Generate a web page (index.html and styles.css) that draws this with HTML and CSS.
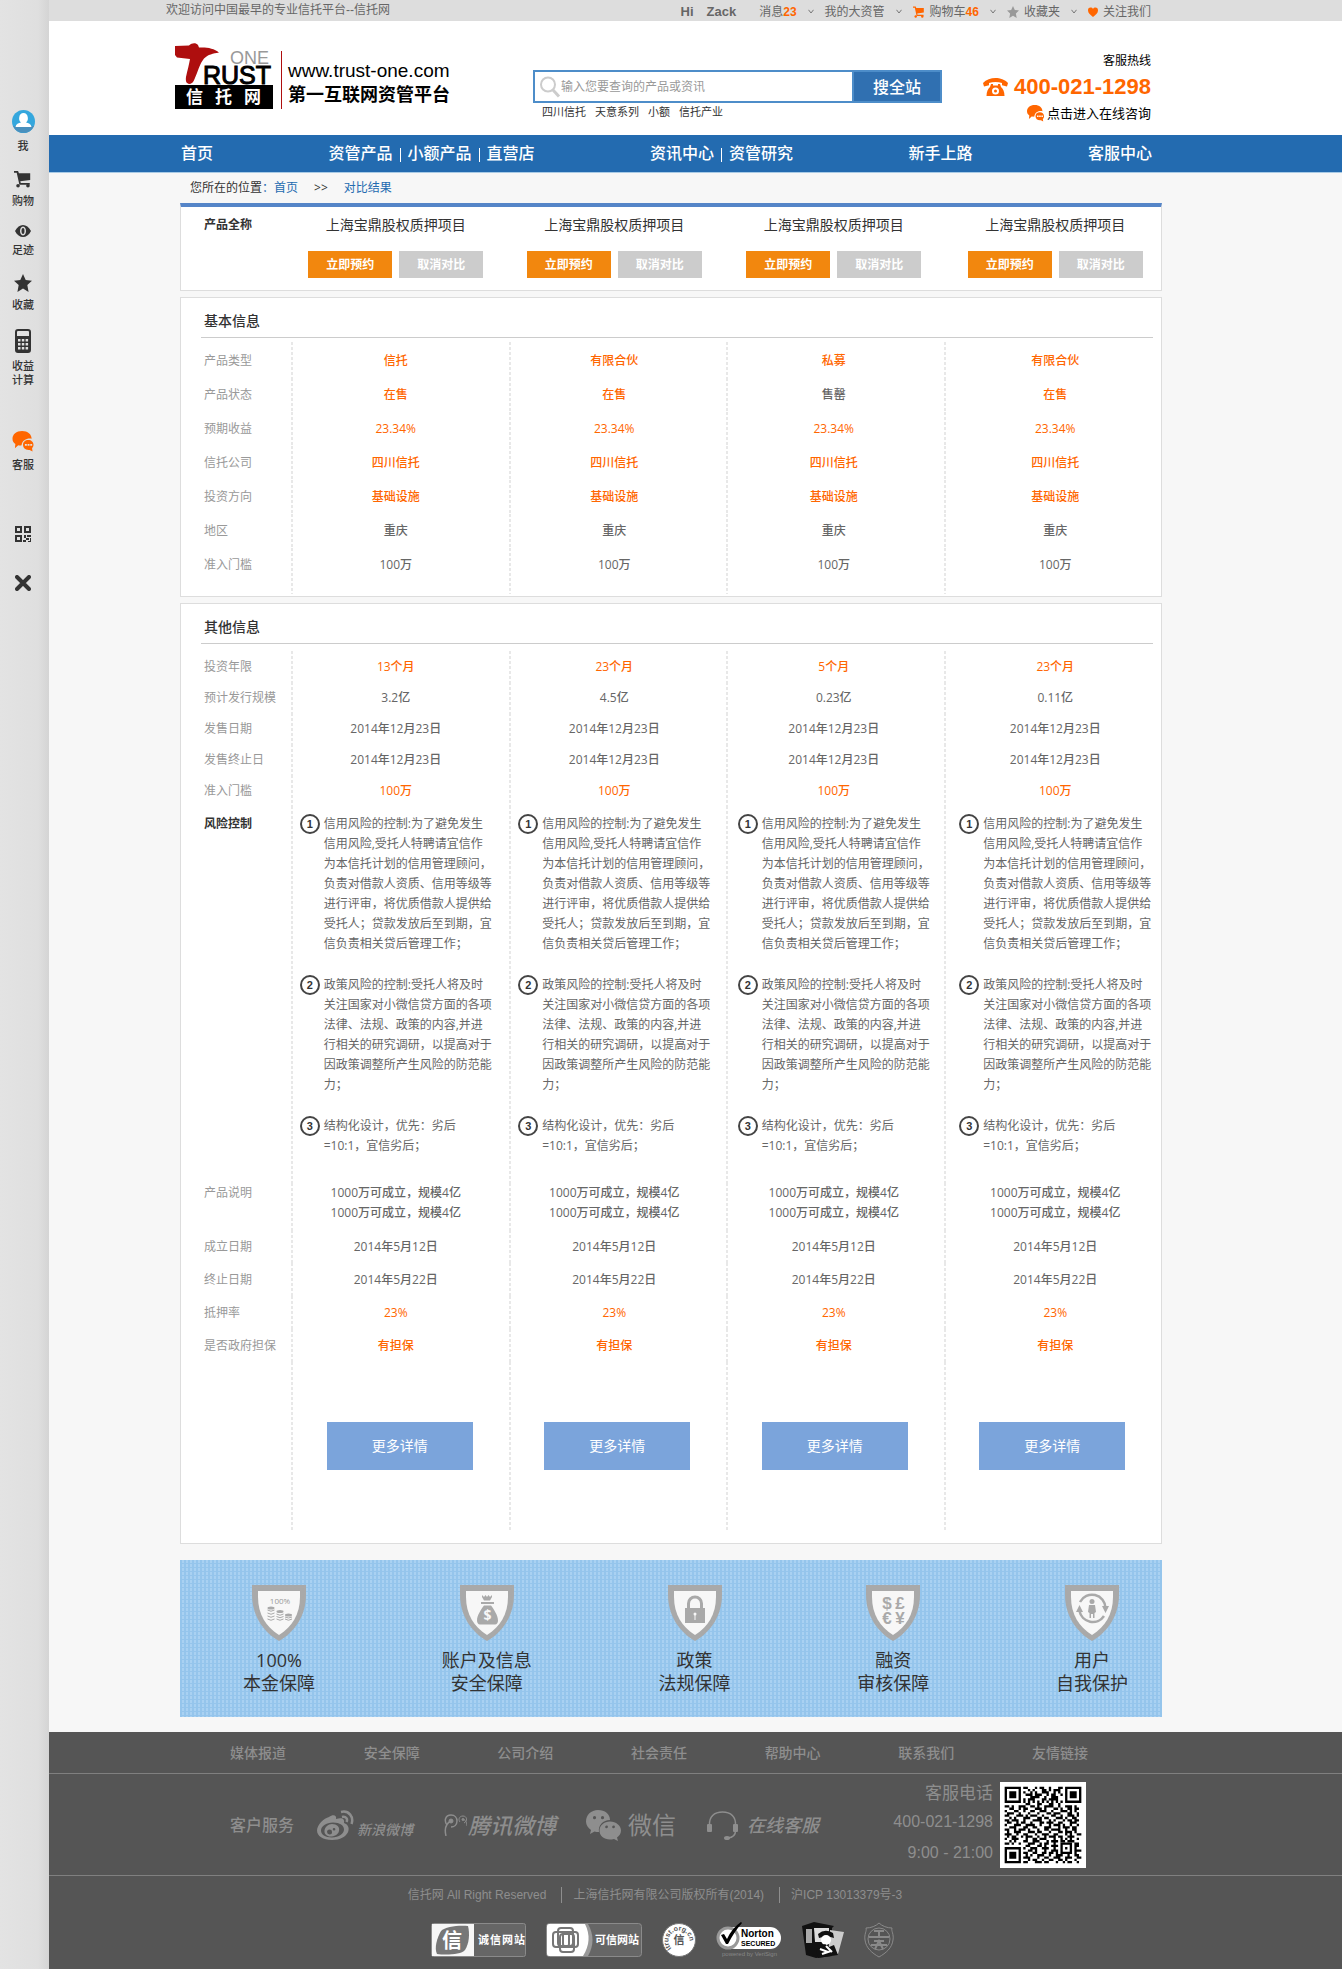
FILE: index.html
```html
<!DOCTYPE html>
<html lang="zh-CN">
<head>
<meta charset="utf-8">
<meta name="viewport" content="width=device-width, initial-scale=1">
<title>对比结果 - 信托网</title>
<link rel="stylesheet" href="styles.css">
</head>
<body>
<svg class="defs" aria-hidden="true">
  <symbol id="i-cart" viewBox="0 0 20 20"><path d="M0 1h4.500l1 2.500H18V11l-11 1.500.5 2H17.500v2H6L3 3H0z"/><circle cx="4.500" cy="17.500" r="2"/><circle cx="15.500" cy="17.500" r="2"/></symbol>
  <symbol id="i-star" viewBox="0 0 20 20"><path d="M10 0l3 6.600 7 .8-5.200 4.900L16.200 20 10 16.200 3.800 20l1.400-7.700L0 7.400l7-.8z"/></symbol>
  <symbol id="i-chat" viewBox="0 0 22 22"><path d="M10 0c6 0 10 3.500 10 8-4-1-10 1-10.500 7-1 .3-2.500.2-3.500 0L2.500 18l.5-4.500C1 12 0 10.500 0 8c0-4.500 4-8 10-8z"/><path fill-rule="evenodd" d="M16.500 9.500c3.200 0 5.500 2.200 5.500 5 0 1.800-.8 2.800-1.500 3.500l.5 3.500-3-1.700c-4.200.6-7-2-7-5.300 0-2.800 2.300-5 5.500-5zM13 13.500v2h2v-2zm2.800 0v2h2v-2zm2.800 0v2h2v-2z"/></symbol>
  <symbol id="i-down" viewBox="0 0 6 5"><path d="M.5.8L3 4 5.500.8" fill="none" stroke="#777"/></symbol>
  <symbol id="i-shield" viewBox="0 0 54 56"><path fill="#a9a9a9" d="M0 0h54v10c0 20-11 37-27 46C11 47 0 30 0 10z"/><path fill="#f7f7f7" d="M6 6h42v6c0 17-8 30-21 38C14 42 6 29 6 12z"/></symbol>
</svg>

<aside class="rail">
  <nav class="rail-group" aria-label="快捷工具">
    <a href="#" class="rail-item"><svg width="23" height="23" viewBox="0 0 23 23"><circle cx="11.500" cy="11.500" r="11.500" fill="#35a7dd"/><path d="M1 16a11.500 11.500 0 0 0 21 0z" fill="#4a90bd"/><path d="M3.500 17c.5-3 3-4 5.500-4.500C7 11 7 9 7.200 7.500 7.500 4.500 9 3 11.500 3s4 1.500 4.300 4.500c.2 1.500.2 3.500-1.800 5 2.500.5 5 1.500 5.500 4.500z" fill="#fff"/></svg><span>我</span></a>
    <a href="#" class="rail-item"><svg width="18" height="18"><use href="#i-cart"/></svg><span>购物</span></a>
    <a href="#" class="rail-item"><svg width="16" height="12" viewBox="0 0 16 12"><path fill-rule="evenodd" d="M0 6c2-4 5-6 8-6s6 2 8 6c-2 4-5 6-8 6S2 10 0 6zm8-4.500C6 1.500 5 4 5 6s1 4.500 3 4.500S11 8 11 6 10 1.500 8 1.500z"/><ellipse cx="8" cy="6" rx="1.500" ry="3"/></svg><span>足迹</span></a>
    <a href="#" class="rail-item"><svg width="18" height="18"><use href="#i-star"/></svg><span>收藏</span></a>
    <a href="#" class="rail-item"><svg width="16" height="24" viewBox="0 0 16 24"><rect x="1" y="1" width="14" height="22" rx="2" fill="none" stroke="#333" stroke-width="2"/><path d="M1 7h14v16H1z"/><path fill="#e0e0e0" d="M3 10h2.500v2.500H3zM6.800 10h2.500v2.500H6.800zM10.600 10h2.500v2.500h-2.500zM3 14h2.500v2.500H3zM6.800 14h2.500v2.500H6.800zM10.600 14h2.500v2.500h-2.500zM3 18h2.500v2.500H3zM6.800 18h2.500v2.500H6.800zM10.600 18h2.500v2.500h-2.500z"/></svg><span>收益<br>计算</span></a>
  </nav>
  <a href="#" class="rail-item rail-service"><svg class="orange" width="22" height="21"><use href="#i-chat"/></svg><span>客服</span></a>
  <div class="rail-tools">
    <button type="button" aria-label="二维码"><svg width="16" height="16" viewBox="0 0 16 16"><path fill-rule="evenodd" d="M0 0h7v7H0zm2 2v3h3V2zM9 0h7v7H9zm2 2v3h3V2zM0 9h7v7H0zm2 2v3h3v-3zM9 9h2v3H9zm3 0h4v2h-4zm-1 3h3v2h-3zm4 0h1v4h-3v-1h2zM8 14h3v2H8z"/></svg></button>
    <button type="button" aria-label="关闭"><svg width="16" height="16" viewBox="0 0 16 16"><path d="M2 2l12 12M14 2L2 14" stroke="#333" stroke-width="4" stroke-linecap="round"/></svg></button>
  </div>
</aside>

<div class="page">
  <div class="band topbar">
    <div class="wrap-wide topbar-row">
      <span>欢迎访问中国最早的专业信托平台--信托网</span>
      <ul class="topbar-links">
        <li class="hello"><b>Hi</b><b>Zack</b></li>
        <li><a href="#">消息<b class="orange">23</b></a></li>
        <li><svg width="6" height="5"><use href="#i-down"/></svg></li>
        <li><a href="#">我的大资管</a></li>
        <li><svg width="6" height="5"><use href="#i-down"/></svg></li>
        <li><a href="#"><svg class="orange" width="12" height="12"><use href="#i-cart"/></svg>购物车<b class="orange">46</b></a></li>
        <li><svg width="6" height="5"><use href="#i-down"/></svg></li>
        <li><a href="#"><svg class="gray" width="12" height="12"><use href="#i-star"/></svg>收藏夹</a></li>
        <li><svg width="6" height="5"><use href="#i-down"/></svg></li>
        <li><a href="#"><svg class="orange" width="10" height="10" viewBox="0 0 10 10"><path d="M5 10C2 7.500 0 6 0 3.200 0 0 4 0 5 2c1-2 5-2 5 1.200C10 6 8 7.500 5 10z"/></svg>关注我们</a></li>
      </ul>
    </div>
  </div>

  <header class="band header">
    <div class="wrap-wide header-row">
      <a href="#" class="logo">
        <svg width="98" height="66" viewBox="0 0 98 66" role="img" aria-label="Trust One 信托网">
          <path fill="#ae0e0e" d="M0 3l14-.5C17-.5 21-.5 23 2l1 2.500c7-.5 15 .5 20 5-6 1-11 2-15 6-4 5-5 10-8 17-2 4-2 8-7 8.500-3-.5-3.500-3-3-7 1.500-7 3-12 4-18L2 14.500 0 12z"/>
          <text x="55" y="21" font-size="18" fill="#999">ONE</text>
          <text x="28" y="41" font-size="25" stroke="#000" stroke-width="1">RUST</text>
          <path d="M0 42h98v24H0z"/>
          <text x="11 40 69" y="60" font-size="17" font-weight="700" fill="#fff">信托网</text>
        </svg>
        <span class="logo-text"><span>www.trust-one.com</span><b>第一互联网资管平台</b></span>
      </a>
      <div class="search">
        <form class="search-box">
          <label class="search-field"><svg width="22" height="22" viewBox="0 0 22 22" fill="none" stroke="#ccc"><circle cx="9" cy="8.500" r="7" stroke-width="2"/><path d="M14 14l6 6.500" stroke-width="3"/></svg><input type="search" aria-label="搜索" placeholder="输入您要查询的产品或资讯"></label>
          <button type="submit">搜全站</button>
        </form>
        <div class="hot"><a href="#">四川信托</a><a href="#">天意系列</a><a href="#">小额</a><a href="#">信托产业</a></div>
      </div>
      <div class="contact">
        <span>客服热线</span>
        <strong><svg width="25" height="18" viewBox="0 0 25 18"><path d="M0 5C3 1.500 8 0 12.500 0S22 1.500 25 5l-1 3.500-5-1.300V5c-4-1.500-9-1.500-13 0v2.200L1 8.500z"/><path fill-rule="evenodd" d="M8 6h2v1.500h5V6h2l1 3c2 2 3.500 4.500 3.500 9h-18C3.500 13.500 5 11 7 9zm4.500 3.500a3.500 3.500 0 1 0 0 7 3.500 3.500 0 0 0 0-7zm0 2a1.500 1.500 0 1 1 0 3 1.500 1.500 0 0 1 0-3z"/></svg>400-021-1298</strong>
        <a href="#"><svg class="orange" width="17" height="17"><use href="#i-chat"/></svg>点击进入在线咨询</a>
      </div>
    </div>
  </header>

  <nav class="band mainnav" aria-label="主导航">
    <ul class="wrap mainnav-row">
      <li><a href="#">首页</a></li>
      <li><a href="#">资管产品</a><i></i><a href="#">小额产品</a><i></i><a href="#">直营店</a></li>
      <li><a href="#">资讯中心</a><i></i><a href="#">资管研究</a></li>
      <li><a href="#">新手上路</a></li>
      <li><a href="#">客服中心</a></li>
    </ul>
  </nav>

  <main class="band">
    <div class="wrap">
      <div class="crumbs">您所在的位置<a href="#">：首页</a><span>&gt;&gt;</span><a href="#">对比结果</a></div>

      <section class="card card-head">
        <table class="compare">
          <colgroup><col class="c-label"><col><col><col><col></colgroup>
          <tbody>
            <tr class="names"><th scope="row">产品全称</th><td>上海宝鼎股权质押项目</td><td>上海宝鼎股权质押项目</td><td>上海宝鼎股权质押项目</td><td>上海宝鼎股权质押项目</td></tr>
            <tr class="acts"><td></td>
              <td><button type="button">立即预约</button><button type="button" class="off">取消对比</button></td>
              <td><button type="button">立即预约</button><button type="button" class="off">取消对比</button></td>
              <td><button type="button">立即预约</button><button type="button" class="off">取消对比</button></td>
              <td><button type="button">立即预约</button><button type="button" class="off">取消对比</button></td></tr>
          </tbody>
        </table>
      </section>

      <section class="card card-basic">
        <h2>基本信息</h2>
        <table class="compare ruled">
          <colgroup><col class="c-label"><col><col><col><col></colgroup>
          <tbody>
            <tr class="hot-row"><th scope="row">产品类型</th><td>信托</td><td>有限合伙</td><td>私募</td><td>有限合伙</td></tr>
            <tr class="hot-row"><th scope="row">产品状态</th><td>在售</td><td>在售</td><td class="sold">售罄</td><td>在售</td></tr>
            <tr class="hot-row"><th scope="row">预期收益</th><td>23.34%</td><td>23.34%</td><td>23.34%</td><td>23.34%</td></tr>
            <tr class="hot-row"><th scope="row">信托公司</th><td>四川信托</td><td>四川信托</td><td>四川信托</td><td>四川信托</td></tr>
            <tr class="hot-row"><th scope="row">投资方向</th><td>基础设施</td><td>基础设施</td><td>基础设施</td><td>基础设施</td></tr>
            <tr><th scope="row">地区</th><td>重庆</td><td>重庆</td><td>重庆</td><td>重庆</td></tr>
            <tr><th scope="row">准入门槛</th><td>100万</td><td>100万</td><td>100万</td><td>100万</td></tr>
          </tbody>
        </table>
      </section>

      <section class="card card-other">
        <h2>其他信息</h2>
        <table class="compare ruled">
          <colgroup><col class="c-label"><col><col><col><col></colgroup>
          <tbody>
            <tr class="hot-row"><th scope="row">投资年限</th><td>13个月</td><td>23个月</td><td>5个月</td><td>23个月</td></tr>
            <tr><th scope="row">预计发行规模</th><td>3.2亿</td><td>4.5亿</td><td>0.23亿</td><td>0.11亿</td></tr>
            <tr><th scope="row">发售日期</th><td>2014年12月23日</td><td>2014年12月23日</td><td>2014年12月23日</td><td>2014年12月23日</td></tr>
            <tr><th scope="row">发售终止日</th><td>2014年12月23日</td><td>2014年12月23日</td><td>2014年12月23日</td><td>2014年12月23日</td></tr>
            <tr class="hot-row"><th scope="row">准入门槛</th><td>100万</td><td>100万</td><td>100万</td><td>100万</td></tr>
          </tbody>
          <tbody>
            <tr class="risk"><th scope="row">风险控制</th>
              <td><ol><li>信用风险的控制:为了避免发生信用风险,受托人特聘请宜信作为本信托计划的信用管理顾问，负责对借款人资质、信用等级等进行评审，将优质借款人提供给受托人；贷款发放后至到期，宜信负责相关贷后管理工作；</li><li>政策风险的控制:受托人将及时关注国家对小微信贷方面的各项法律、法规、政策的内容,并进行相关的研究调研，以提高对于因政策调整所产生风险的防范能力；</li><li>结构化设计，优先：劣后<br>=10:1，宜信劣后；</li></ol></td>
              <td><ol><li>信用风险的控制:为了避免发生信用风险,受托人特聘请宜信作为本信托计划的信用管理顾问，负责对借款人资质、信用等级等进行评审，将优质借款人提供给受托人；贷款发放后至到期，宜信负责相关贷后管理工作；</li><li>政策风险的控制:受托人将及时关注国家对小微信贷方面的各项法律、法规、政策的内容,并进行相关的研究调研，以提高对于因政策调整所产生风险的防范能力；</li><li>结构化设计，优先：劣后<br>=10:1，宜信劣后；</li></ol></td>
              <td><ol><li>信用风险的控制:为了避免发生信用风险,受托人特聘请宜信作为本信托计划的信用管理顾问，负责对借款人资质、信用等级等进行评审，将优质借款人提供给受托人；贷款发放后至到期，宜信负责相关贷后管理工作；</li><li>政策风险的控制:受托人将及时关注国家对小微信贷方面的各项法律、法规、政策的内容,并进行相关的研究调研，以提高对于因政策调整所产生风险的防范能力；</li><li>结构化设计，优先：劣后<br>=10:1，宜信劣后；</li></ol></td>
              <td><ol><li>信用风险的控制:为了避免发生信用风险,受托人特聘请宜信作为本信托计划的信用管理顾问，负责对借款人资质、信用等级等进行评审，将优质借款人提供给受托人；贷款发放后至到期，宜信负责相关贷后管理工作；</li><li>政策风险的控制:受托人将及时关注国家对小微信贷方面的各项法律、法规、政策的内容,并进行相关的研究调研，以提高对于因政策调整所产生风险的防范能力；</li><li>结构化设计，优先：劣后<br>=10:1，宜信劣后；</li></ol></td>
            </tr>
            <tr class="notes"><th scope="row">产品说明</th><td>1000万可成立，规模4亿<br>1000万可成立，规模4亿</td><td>1000万可成立，规模4亿<br>1000万可成立，规模4亿</td><td>1000万可成立，规模4亿<br>1000万可成立，规模4亿</td><td>1000万可成立，规模4亿<br>1000万可成立，规模4亿</td></tr>
          </tbody>
          <tbody class="loose">
            <tr><th scope="row">成立日期</th><td>2014年5月12日</td><td>2014年5月12日</td><td>2014年5月12日</td><td>2014年5月12日</td></tr>
            <tr><th scope="row">终止日期</th><td>2014年5月22日</td><td>2014年5月22日</td><td>2014年5月22日</td><td>2014年5月22日</td></tr>
            <tr class="hot-row"><th scope="row">抵押率</th><td>23%</td><td>23%</td><td>23%</td><td>23%</td></tr>
            <tr class="hot-row"><th scope="row">是否政府担保</th><td>有担保</td><td>有担保</td><td>有担保</td><td>有担保</td></tr>
          </tbody>
          <tfoot>
            <tr><td></td><td><button type="button">更多详情</button></td><td><button type="button">更多详情</button></td><td><button type="button">更多详情</button></td><td><button type="button">更多详情</button></td></tr>
          </tfoot>
        </table>
      </section>

      <ul class="promise">
        <li><svg width="54" height="56" viewBox="0 0 54 56"><use href="#i-shield"/><text x="28" y="19" font-size="8" text-anchor="middle" fill="#999">100%</text><g fill="#a9a9a9"><ellipse cx="19" cy="23" rx="3.500" ry="1.500"/><ellipse cx="28" cy="26.500" rx="3.500" ry="1.500"/><ellipse cx="36.500" cy="30" rx="3.500" ry="1.500"/></g><path fill="none" stroke="#a9a9a9" d="M15.500 25q3.500 2.500 7 0M15.500 28q3.500 2.500 7 0M15.500 31q3.500 2.500 7 0M15.500 34q3.500 2.500 7 0M24.500 29q3.500 2.500 7 0M24.500 31.500q3.500 2.500 7 0M24.500 34q3.500 2.500 7 0M33 32q3.500 2 7 0M33 34q3.500 2.500 7 0"/></svg><span>100%<br>本金保障</span></li>
        <li><svg width="54" height="56" viewBox="0 0 54 56"><use href="#i-shield"/><path fill="#a9a9a9" d="M22 10l2 2 1.500-2 1.500 2 1.500-2 1.500 2 2-2 0 2-2 3.500h-6l-2-3.500zM21 17h13v2H21zM24 20.500h7c3 4 7 10 7 15 0 2-1 4-3 4H20c-2 0-3-2-3-4 0-5 4-11 7-15z"/><text x="27.500" y="35" font-size="14" font-weight="700" text-anchor="middle" fill="#f7f7f7">$</text></svg><span>账户及信息<br>安全保障</span></li>
        <li><svg width="54" height="56" viewBox="0 0 54 56"><use href="#i-shield"/><path d="M20.500 24v-5.500a6.500 6.500 0 0 1 13 0V24" fill="none" stroke="#a9a9a9" stroke-width="3"/><path fill="#a9a9a9" d="M17 23h20v15H17z"/><circle cx="27" cy="29" r="1.500" fill="#f7f7f7"/><path stroke="#f7f7f7" d="M27 29v6"/></svg><span>政策<br>法规保障</span></li>
        <li><svg width="54" height="56" viewBox="0 0 54 56"><use href="#i-shield"/><g class="money" font-size="17" font-weight="700" text-anchor="middle" fill="#a9a9a9"><text x="21" y="24">$</text><text x="34" y="24">£</text><text x="21" y="39">€</text><text x="34" y="39">¥</text></g></svg><span>融资<br>审核保障</span></li>
        <li><svg width="54" height="56" viewBox="0 0 54 56"><use href="#i-shield"/><g fill="none" stroke="#a9a9a9" stroke-width="2.500"><path d="M15 17a13.500 13.500 0 0 1 25.500 6"/><path d="M39 31a13.500 13.500 0 0 1-24.500-5"/></g><path fill="#a9a9a9" d="M37 21h7l-3.500 7zM11 27l3.500-7 3.500 7z"/><circle cx="27" cy="16.500" r="2.500" fill="#a9a9a9"/><path fill="#a9a9a9" d="M24 20h6l1 7-1.500 1V33h-1.500v-4h-2v4h-1.500v-5L23 27z"/></svg><span>用户<br>自我保护</span></li>
      </ul>
    </div>
  </main>

  <footer class="footer">
    <div class="band">
      <ul class="wrap footer-links">
        <li><a href="#">媒体报道</a></li><li><a href="#">安全保障</a></li><li><a href="#">公司介绍</a></li><li><a href="#">社会责任</a></li><li><a href="#">帮助中心</a></li><li><a href="#">联系我们</a></li><li><a href="#">友情链接</a></li>
      </ul>
    </div>
    <div class="band footer-mid">
      <div class="wrap footer-service">
        <strong>客户服务</strong>
        <a href="#" class="s-weibo"><svg width="37" height="30" viewBox="0 0 37 30"><path fill-rule="evenodd" d="M12 7c4-3 8-2 7 2 6-2 9 0 8 4 9 3 5 17-12 17C6 30 0 26 0 20.500 0 15 7 8 12 7zM16 12.500c-7 0-12 4-12 8s4 7 11 7 12-4 12-8-4-7-11-7z"/><path fill-rule="evenodd" d="M15 14c5 0 8 3 7 7s-5 5.500-8.500 5.500S7 24 7.500 20.500 11 14 15 14zm-2.500 5.500a2.500 2.500 0 1 0 .1 5 2.500 2.500 0 0 0-.1-5zM17 18a1.300 1.300 0 1 0 .1 2.600A1.300 1.300 0 0 0 17 18z"/><path fill="none" stroke="#8e8e8e" stroke-width="2.500" d="M24 2c8-2 13 5 10.500 12M25 7c4-1 6 2 4.500 5"/></svg><em>新浪微博</em></a>
        <a href="#" class="s-tencent"><svg width="23" height="22" viewBox="0 0 23 22" fill="none" stroke="#8e8e8e"><path stroke-width="1.500" d="M2 22C0 14 3 9 7 7M3 11C0 7 1 1 7 1c4 0 6 3 6 6 0 4-3 6-6 6"/><path d="M23 12c0-3-1-5-3-6.500M16 8c-2-2-1-6 3-6s5 5 1 7"/><circle cx="7" cy="7" r="2" fill="#8e8e8e"/><circle cx="19" cy="5.500" r="1" fill="#8e8e8e"/></svg><em>腾讯微博</em></a>
        <a href="#" class="s-wechat"><svg width="35" height="31" viewBox="0 0 35 31"><path fill-rule="evenodd" d="M12 0c7 0 12 4 12 10-7 0-12 5-11 12-2 0-3 0-4.500-.6L4 24l1-4C2 18 0 15 0 11.500 0 5 5 0 12 0zM8.500 6a1.600 1.600 0 1 0 .1 3.200A1.600 1.600 0 0 0 8.500 6zm8 0a1.600 1.600 0 1 0 .1 3.200A1.600 1.600 0 0 0 16.500 6z"/><path fill-rule="evenodd" d="M24 11.500c6 0 11 4 11 9 0 3-1.500 5-4 7l1 3.500-4-2c-8 2-14.500-2-14.500-8.500 0-5 4.500-9 10.500-9zM20.500 15.500a1.400 1.400 0 1 0 .1 2.800 1.400 1.400 0 0 0-.1-2.800zm7 0a1.400 1.400 0 1 0 .1 2.800 1.400 1.400 0 0 0-.1-2.800z"/></svg><span>微信</span></a>
        <a href="#" class="s-online"><svg width="31" height="29" viewBox="0 0 31 29"><path fill="none" stroke="#8e8e8e" stroke-width="1.500" d="M2.500 14C2 6 7 1 15.500 1S29 6 28.500 14M28.500 20c0 4-3 6.500-7.500 7"/><rect y="13" width="5" height="8" rx="1"/><rect x="26" y="13" width="5" height="8" rx="1"/><ellipse cx="20" cy="27" rx="3" ry="2"/></svg><em>在线客服</em></a>
        <p class="hotline"><span>客服电话</span>400-021-1298<br>9:00 - 21:00</p>
        <svg class="qr" width="86" height="86" viewBox="-2 -2 37 37" role="img" aria-label="二维码">
          <path fill="#fff" d="M-2-2h37v37H-2z"/>
          <path fill-rule="evenodd" d="M0 0h7v7H0zM1 1v5h5V1zM2 2h3v3H2zM26 0h7v7h-7zM27 1v5h5V1zM28 2h3v3h-3zM0 26h7v7H0zM1 27v5h5v-5zM2 28h3v3H2zM24 24h5v5h-5zM25 25v3h3v-3zM26 26h1v1h-1z"/>
          <path fill="none" stroke="#000" d="M8 .5h2m3 0h1m1 0h2m2 0h1m3 0h2M10 1.500h1m1 0h1m3 0h2m1 0h1m1 0h3M8 2.500h1m2 0h1m1 0h1m2 0h3m2 0h1m1 0h1M9 3.500h3m1 0h3m2 0h1m1 0h2m2 0h1M11 4.500h4m2 0h1m2 0h3M8 5.500h1m1 0h3m3 0h2m1 0h4M8 6.500h1m1 0h1m1 0h1m1 0h1m1 0h1m1 0h1m1 0h1m1 0h1m1 0h1M9 7.500h2m3 0h2m3 0h2m2 0h1M0 8.500h2m1 0h1m2 0h3m2 0h2m1 0h1m2 0h4m2 0h1m2 0h3m1 0h1M2 9.500h2m2 0h1m1 0h2m3 0h3m1 0h1m3 0h2m1 0h1m2 0h2m1 0h2M0 10.500h1m3 0h2m2 0h1m2 0h2m2 0h3m2 0h1m3 0h3m1 0h1m1 0h1M1 11.500h3m2 0h1m3 0h1m3 0h1m3 0h2m1 0h3m3 0h2m2 0h1M0 12.500h2m3 0h3m1 0h1m1 0h3m2 0h1m3 0h2m2 0h1m2 0h3m1 0h1M2 13.500h1m1 0h1m3 0h3m3 0h2m1 0h2m3 0h3m1 0h1m2 0h2M0 14.500h2m1 0h3m2 0h1m3 0h4m3 0h1m1 0h1m3 0h1m1 0h2m1 0h2M1 15.500h2m2 0h1m1 0h2m2 0h1m3 0h2m1 0h3m2 0h2m3 0h3M0 16.500h1m3 0h3m2 0h4m2 0h1m3 0h1m1 0h3m1 0h1m2 0h1m2 0h1M2 17.500h3m3 0h2m2 0h2m3 0h3m3 0h1m1 0h3m1 0h2M0 18.500h2m2 0h1m1 0h3m1 0h1m3 0h1m2 0h2m1 0h4m2 0h1m2 0h2M1 19.500h1m2 0h3m3 0h3m1 0h2m3 0h1m3 0h2m1 0h3m1 0h1M0 20.500h3m2 0h1m2 0h2m3 0h1m2 0h3m2 0h2m3 0h1m1 0h1m2 0h2M1 21.500h1m1 0h2m2 0h1m1 0h3m2 0h1m2 0h1m1 0h3m1 0h2m2 0h3M0 22.500h1m2 0h3m3 0h1m2 0h2m1 0h3m3 0h1m2 0h1m1 0h1m1 0h1m2 0h1M2 23.500h1m1 0h1m3 0h2m2 0h3m3 0h1m1 0h3m1 0h2m1 0h3M0 24.500h2m1 0h1m2 0h1m3 0h3m2 0h1m1 0h2m2 0h1m8 0h2M9 25.500h2m3 0h2m1 0h1m2 0h3m7 0h2M8 26.500h1m2 0h3m2 0h3m2 0h1m8 0h1M10 27.500h2m1 0h1m3 0h1m2 0h3m7 0h3M8 28.500h2m2 0h2m2 0h2m1 0h2m1 0h1m7 0h1M9 29.500h1m1 0h1m2 0h3m2 0h1m2 0h3m2 0h1m2 0h2M8 30.500h3m3 0h1m2 0h2m2 0h3m2 0h3m2 0h2M10 31.500h1m1 0h2m2 0h1m2 0h2m2 0h2m1 0h1m3 0h1M8 32.500h2m3 0h3m1 0h2m3 0h1m2 0h1m1 0h2m2 0h1"/>
        </svg>
      </div>
    </div>
    <div class="band footer-end">
      <p class="legal"><span>信托网 All Right Reserved</span><span>上海信托网有限公司版权所有(2014)</span><span>沪ICP 13013379号-3</span></p>
      <ul class="badges">
        <li><svg width="95" height="34" viewBox="0 0 95 34"><rect x=".5" y=".5" width="94" height="33" rx="2" fill="#666" stroke="#8a8a8a"/><path fill="#f7f7f7" d="M1 1h42v32H1z"/><path fill="#777" d="M10 8c4-5 20-6 27-5 2 8 1 18-3 24-4 5-20 5-28 4-3-6 0-16 4-23z"/><text x="11" y="25" font-size="20" font-weight="700" fill="#fff">信</text><text x="47 59 71 83" y="21" font-size="11" font-weight="700" fill="#fff">诚信网站</text></svg></li>
        <li><svg width="96" height="34" viewBox="0 0 96 34"><rect x=".5" y=".5" width="95" height="33" rx="3" fill="#666" stroke="#8a8a8a"/><path fill="#999" d="M30 1h12q9 16 0 32H30z"/><path fill="#fff" d="M3 1h36q8 16-2 32H3q-2 0-2-2V3q0-2 2-2z"/><g fill="none" stroke="#777" stroke-width="2"><rect x="12" y="5" width="15" height="18" rx="3"/><rect x="14" y="11" width="14" height="18" rx="3"/><rect x="7" y="9" width="16" height="15" rx="3"/><rect x="17" y="9" width="15" height="15" rx="3"/></g><text x="49 60 71 82" y="21" font-size="11" font-weight="700" fill="#fff">可信网站</text></svg></li>
        <li><svg width="34" height="34" viewBox="0 0 34 34"><circle cx="17" cy="17" r="16.500" fill="#fff" stroke="#777"/><path id="arc" d="M9.500 25.500A10.500 10.500 0 1 1 25 25" fill="none"/><text font-size="7" font-weight="700" fill="#555"><textPath href="#arc">itrust.org.cn</textPath></text><text x="17" y="21" font-size="11" font-weight="700" text-anchor="middle" fill="#555">信</text></svg></li>
        <li><svg width="66" height="36" viewBox="0 0 66 36"><rect x="8" y="5" width="57" height="22" rx="11" fill="#fff"/><circle cx="12" cy="16" r="10" fill="#fff" stroke="#999" stroke-width="3"/><path fill="#000" d="M5 13l3-1 3 5Q16 6 25 0l1 1q-8 9-14 21h-2z"/><text x="25" y="15" font-size="10" font-weight="700" fill="#000">Norton</text><text x="25" y="24" font-size="7" font-weight="700" fill="#000">SECURED</text><text x="6" y="34" font-size="6" fill="#888">powered by VeriSign</text></svg></li>
        <li><svg width="42" height="36" viewBox="0 0 42 36" fill="#111"><path d="M0 4l12-4 20 4-2 2v28l-16 2-10-3z"/><path fill="#aaa" d="M4 7h6v14H4z"/><path fill="#ddd" d="M12 6h15v14H13z"/><path fill="#ccc" d="M28 8l14 2-6 22-10 2z"/><path d="M16 12q7-6 15-1l1 5q-7-3-15 0z"/><circle cx="24" cy="18" r="5" fill="#fff"/><path d="M14 28l9-6 4 3 5-2 4 10-20 3z"/><path d="M18 27l8 3M24 24l6 6M20 32l9-3" stroke="#fff" stroke-width="2"/></svg></li>
        <li><svg width="30" height="36" viewBox="0 0 30 36" fill="none" stroke="#8a8a8a"><path d="M15 1c3 3 8 5 13 5-1 3 2 6 1 12-1 8-7 13-14 17C8 31 2 26 1 18 0 12 3 9 2 6c5 0 10-2 13-5z"/><circle cx="15" cy="17" r="11"/><path stroke-width="2" d="M10 9h10M15 8v7M5 15h20M10 19h10M7 23h16M11 27l4-8 4 8"/></svg></li>
      </ul>
    </div>
  </footer>
</div>
</body>
</html>
```
FILE: styles.css
```css
*, ::before { box-sizing: border-box; }

body {
  margin: 0;
  display: grid;
  grid-template-columns: 49px minmax(0, 1fr);
  background: #f7f7f7;
  color: #666;
  font: 12px/20px "Open Sans", "Noto Sans CJK SC", sans-serif;
}

a { color: inherit; text-decoration: none; }
ul, ol { list-style: none; margin: 0; padding: 0; }
svg { display: block; flex: none; }
button { border: 0; padding: 0; font: inherit; cursor: pointer; }
h2, p { margin: 0; }
.defs { position: absolute; width: 0; height: 0; }
.orange { color: #f60; fill: #f60; }
.gray { fill: #999; }

/* side rail */
.rail {
  display: flex;
  flex-direction: column;
  align-items: center;
  padding: 110px 3px 0 0;
  background: linear-gradient(90deg, #e3e3e3 0, #dfdfdf 38px, #d4d4d4 49px);
  color: #333;
  fill: #333;
  font-size: 11px;
  font-weight: 500;
  line-height: 14px;
}
.rail-group { display: flex; flex-direction: column; gap: 17px; }
.rail-item { display: flex; flex-direction: column; align-items: center; gap: 6px; }
.rail-service { margin-top: 44px; }
.rail-tools { display: flex; flex-direction: column; gap: 33px; margin-top: 54px; }
.rail-tools button { background: none; fill: #333; }

/* page frame: the right padding balances the rail */
.band { padding-right: 49px; }
.wrap { max-width: 982px; margin: 0 auto; }
.wrap-wide { max-width: 1010px; margin: 0 auto; padding-right: 25px; }

/* top bar */
.topbar { background: #ddd; }
.topbar-row { display: flex; justify-content: space-between; height: 21px; font-family: "Liberation Sans", "Noto Sans CJK SC", sans-serif; }
.topbar-row > span { line-height: 20px; }
.topbar-links { display: flex; align-items: center; gap: 11px; padding-top: 2px; line-height: 20px; }
.topbar-links a { display: flex; align-items: center; }
.topbar-links a svg { margin-right: 5px; }
.hello { display: flex; gap: 13px; margin-right: 12px; font-size: 13px; }

/* header */
.header { background: #fff; color: #000; }
.header-row { display: flex; align-items: flex-start; min-height: 114px; padding-left: 9px; }
.logo { display: flex; flex: 0 0 274px; padding-top: 22px; white-space: nowrap; font-family: "Liberation Sans", "Noto Sans CJK SC", sans-serif; }
.logo-text {
  display: flex;
  flex-direction: column;
  margin: 8px 0 0 8px;
  padding-left: 6px;
  border-left: 1px solid #ae0e0e;
  font-size: 18px;
  line-height: 25px;
}
.logo-text > span { padding-top: 7px; font-size: 19px; }
.search { margin: 49px 0 0 83px; }
.search-box { display: flex; width: 409px; height: 33px; border: 2px solid #4d8dc9; }
.search-field { display: flex; flex: 1; align-items: center; padding-left: 4px; background: #fff; }
.search-field input { flex: 1; min-width: 0; border: 0; outline: 0; padding: 0; background: none; font: inherit; color: #333; }
.search-field input::placeholder { color: #999; opacity: 1; }
.search-box button { width: 88px; border-left: 2px solid #4d8dc9; background: #3070b1; color: #fff; font-size: 16px; font-weight: 500; }
.hot { display: flex; gap: 9px; padding-left: 9px; font-size: 11px; line-height: 18px; color: #333; }
.contact { display: flex; flex-direction: column; align-items: flex-end; margin-left: auto; padding-top: 30px; }
.contact strong { display: flex; align-items: center; gap: 6px; color: #f60; fill: #f60; font: bold 22px/32px "Liberation Sans", sans-serif; }
.contact a { display: flex; align-items: center; gap: 3px; font-size: 13px; }

/* navigation */
.mainnav { background: #236bb0; border-bottom: 1px solid #a9cbe6; color: #fff; }
.mainnav-row { display: flex; justify-content: space-between; padding: 0 10px 0 1px; font-size: 16px; font-weight: 500; line-height: 37px; }
.mainnav-row li { display: flex; align-items: center; }
.mainnav-row i { width: 1px; height: 14px; margin: 2px 7px 0; background: #fff; }

.crumbs { padding-left: 10px; line-height: 30px; color: #333; }
.crumbs a { color: #236bb0; }
.crumbs span { margin: 0 16px; }

/* comparison cards */
.card { margin-bottom: 6px; border: 1px solid #ddd; background: #fff; }
.card-head { border-top: 4px solid #5585c8; }
.card-basic { padding-bottom: 2px; }
.card-other { margin-bottom: 16px; padding-bottom: 11px; }
.card h2 {
  margin: 0 8px 4px 20px;
  padding: 9px 0 2px 3px;
  border-bottom: 1px solid #ccc;
  color: #333;
  font-size: 14px;
  font-weight: 500;
  line-height: 28px;
}
.card-other h2 { margin-bottom: 7px; }

.compare { width: 100%; table-layout: fixed; border-collapse: collapse; }
.c-label { width: 110px; }
.compare th { padding: 0 0 0 23px; text-align: left; font-weight: 400; color: #999; white-space: nowrap; }
.compare td { padding: 0; text-align: center; }
.compare td:nth-child(2) { padding-right: 8px; }
.compare td:nth-child(3) { padding-right: 6px; }
.compare td:nth-child(4) { padding-right: 2px; }
.compare td:nth-child(5) { padding-left: 6px; }
.compare tfoot td:nth-child(n) { padding-left: 0; padding-right: 0; }
.ruled td:nth-child(n+2) { background: repeating-linear-gradient(#e8e8e8 0 3px, #fff 3px 5px) 0 0 / 2px 100% no-repeat; font-weight: 500; }
.hot-row td { color: #f60; }
.hot-row .sold { color: #666; }

.names > * { height: 36px; }
.compare .names th { font-weight: 700; color: #333; }
.names td { font-size: 14px; color: #333; }
.compare .acts td { padding-top: 8px; padding-bottom: 12px; font-size: 0; }
.acts button { width: 84px; height: 27px; background: #f2870e; color: #fff; font-size: 12px; font-weight: 700; vertical-align: top; }
.acts .off { margin-left: 7px; background: #ccc; }

.card-basic tr > * { height: 34px; }
.card-basic tr:first-child > * { height: 36px; padding-top: 2px; }
.card-basic tr:last-child > * { height: 46px; padding-bottom: 12px; }

.card-other tr > * { height: 31px; }
.card-other .risk > *, .card-other .notes > * { height: auto; vertical-align: top; }
.card-other .risk > * { padding-top: 8px; padding-bottom: 27px; }
.compare .risk th { font-weight: 700; color: #333; }
.ruled .risk td:nth-child(n) { font-weight: 400; }
.risk ol { display: inline-flex; flex-direction: column; gap: 21px; width: 192px; counter-reset: risk; text-align: left; vertical-align: top; }
.risk li { counter-increment: risk; padding-left: 24px; }
.risk li::before {
  content: counter(risk);
  float: left;
  width: 20px;
  height: 20px;
  margin-left: -24px;
  border: 2px solid #444;
  border-radius: 50%;
  color: #333;
  font: bold 11px/16px "Liberation Sans", sans-serif;
  text-align: center;
}
.card-other .notes > * { padding-bottom: 7px; }
.card-other .loose tr > * { height: 33px; }
.card-other tfoot td { padding-top: 60px; padding-bottom: 62px; }
.compare tfoot button { display: block; width: 146px; height: 48px; margin: 0 auto; background: #7ba4db; color: #fff; font-size: 14px; font-weight: 400; }

/* promises */
.promise {
  display: flex;
  justify-content: space-between;
  padding: 25px 34px 22px 63px;
  background:
    repeating-linear-gradient(90deg, #95c5ec 0 2px, transparent 2px 4px),
    repeating-linear-gradient(#a9d1f2 0 3px, #95c5ec 3px 4px);
  color: #333;
  font-size: 18px;
  line-height: 23px;
  text-align: center;
}
.promise li { display: flex; flex-direction: column; align-items: center; gap: 8px; }
.promise li > svg { font-family: "Open Sans", sans-serif; }
.money { font-family: "Liberation Sans", sans-serif; }

/* footer */
.footer { margin-top: 15px; background: #555; color: #8e8e8e; fill: #8e8e8e; }
.footer-links { display: flex; justify-content: space-between; padding: 0 74px 0 50px; font-size: 14px; font-weight: 500; line-height: 41px; }
.footer-mid { border: solid #808080; border-width: 1px 0; }
.footer-service { display: flex; align-items: center; padding: 8px 76px 7px 50px; }
.footer-service strong { margin-right: 23px; font-size: 16px; font-weight: 500; }
.footer-service a { display: flex; align-items: center; }
.s-weibo { gap: 3px; margin-right: 31px; font-size: 14px; font-weight: 500; }
.s-weibo em { padding-top: 10px; }
.s-tencent { gap: 1px; margin-right: 30px; font-size: 22px; font-weight: 500; }
.s-wechat { gap: 7px; margin-right: 31px; font-size: 24px; }
.s-online { gap: 9px; font-size: 18px; font-weight: 500; }
.hotline { margin-left: auto; font: 16px/31px "Liberation Sans", "Noto Sans CJK SC", sans-serif; text-align: right; }
.hotline span { display: block; font-size: 17px; line-height: 24px; }
.qr { margin-left: 7px; fill: #000; }
.footer-end { padding-bottom: 11px; }
.legal { display: flex; justify-content: center; padding: 11px 32px 0 0; line-height: 16px; font-family: "Liberation Sans", "Noto Sans CJK SC", sans-serif; }
.legal span + span { margin-left: 15px; padding-left: 11px; border-left: 1px solid #8e8e8e; }
.badges { display: flex; justify-content: center; align-items: center; gap: 20px; padding: 19px 18px 0 0; font-family: "Liberation Sans", "Noto Sans CJK SC", sans-serif; }
```
